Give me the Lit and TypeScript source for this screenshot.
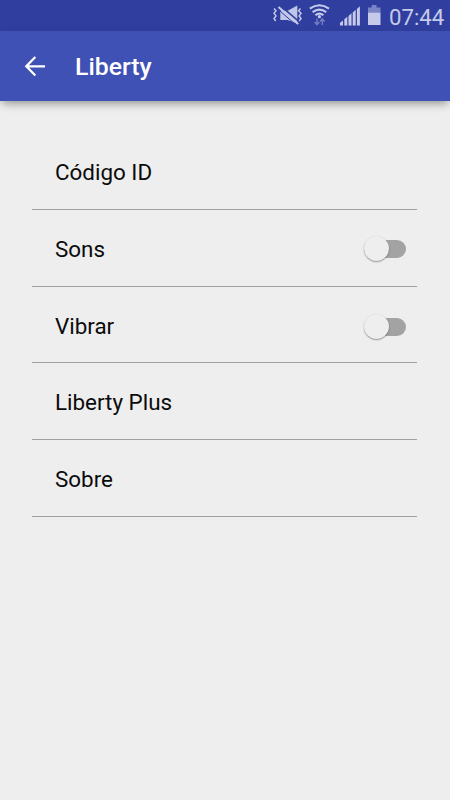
import { LitElement, html, css, svg } from "lit";
import { customElement, property } from "lit/decorators.js";

@customElement("toggle-switch")
class ToggleSwitch extends LitElement {
  static styles = css`
    :host { display: flex; width: 42px; height: 25px; align-items: center; justify-content: flex-end; position: relative; }
    .track { width: 35px; height: 18px; border-radius: 9px; background: #a3a3a3; }
    .thumb { position: absolute; left: 0; top: 0; width: 25px; height: 25px; border-radius: 50%; background: #eeeeee; box-shadow: 0 1px 1.5px rgba(0,0,0,.36), 0 0 1px rgba(0,0,0,.1); }
  `;
  render() { return html`<div class="track"></div><div class="thumb"></div>`; }
}

@customElement("settings-row")
class SettingsRow extends LitElement {
  @property() label = "";
  @property({ type: Boolean }) toggle = false;
  static styles = css`
    :host { display: flex; box-sizing: border-box; align-items: center; justify-content: space-between; padding: 2px 11px 0 23px; border-bottom: 1px solid #a1a1a1; color: #0b0b0b; font: 22.4px/28px Roboto, sans-serif; }
    .label { padding-bottom: 1px; }
    :host([toggle]) .label { padding-bottom: 0; }
    :host(.lower) .label { padding-bottom: 2px; }
  `;
  render() {
    return html`<span class="label">${this.label}</span>${this.toggle ? html`<toggle-switch></toggle-switch>` : null}`;
  }
}

const muted = svg`
  <g fill="none" stroke="#c5cae9" stroke-width="1.4">
    <path d="M274 8.5l2 2.2-2 2.6 2 2.6-2 2.6 1.6 2.5"/>
    <path d="M300.5 8.5l-2 2.2 2.6 2.6-2 2.6 2 2.6-2 2.5"/>
  </g>
  <path d="M280.3 10.8h7.4L297.3 5.5v18l-9.6-3.4h-7.4z" fill="#c0c6e7"/>
  <path d="M280.3 5.6l18.5 15.8" stroke="#303f9f" stroke-width="1.4"/>
  <path d="M278.5 7l19.7 17" stroke="#c5cae9" stroke-width="2"/>
  <path d="M277.3 8.6l19.4 17" stroke="#303f9f" stroke-width="1"/>`;
const wifi = svg`
  <g fill="none" stroke="#c5cae9" stroke-width="2.1">
    <path d="M309.8 8.7Q319.4 1.8 329 8.7"/><path d="M312.6 12.2Q319.4 6.9 326.2 12.2"/><path d="M315.4 15.3Q319.4 11.9 323.4 15.3"/>
  </g>
  <circle cx="319.4" cy="16.7" r="1.6" fill="#c5cae9"/>
  <path d="M317 18.5v6M314.7 22l2.3 2.6 2.3-2.6M322.3 25v-6M320 21.5l2.3-2.6 2.3 2.6" fill="none" stroke="#7580c2" stroke-width="1.4"/>`;
const signal = svg`<path d="M340 25.5v-2.8l3-2.3v5.1zM344.3 25.5v-6.2l3-2.6v8.8zM348.5 25.5v-9.6l3-2.6v12.2zM352.7 25.5v-13l3-2.7v15.7zM356.9 25.5V9l3-2.8v19.3z" fill="#c5cae9"/>`;
const battery = svg`<path d="M371.7 5h4.8v2.6h4V13H368V7.6h3.7z" fill="#7984c5"/><path d="M368 12.7h12.5V25H368z" fill="#c5cae9"/>`;

@customElement("app-root")
class AppRoot extends LitElement {
  static styles = css`
    :host { display: flex; flex-direction: column; width: 450px; height: 800px; background: #eeeeee; overflow: hidden; font-family: Roboto, sans-serif; }
    .status { flex: none; display: flex; align-items: center; height: 31px; background: #303f9f; padding-left: 265px; box-sizing: border-box; }
    .icons { width: 124px; height: 31px; flex: none; }
    .clock { color: #c5cae9; font-size: 22.2px; line-height: 28px; padding-top: 3px; white-space: nowrap; }
    .bar { flex: none; display: flex; align-items: center; height: 70px; background: #3f51b5; box-shadow: 0 4px 9px -2px rgba(0,0,0,.42); color: #fff; box-sizing: border-box; padding-left: 24px; z-index: 1; }
    .back { width: 22px; height: 22px; margin-right: 29px; }
    .title { margin: 0; font-size: 24.8px; font-weight: 500; line-height: 30px; padding-top: 2px; }
    .list { display: grid; grid-template-rows: 77px 77px 76px 77px 77px; margin: 32px 33px 0 32px; width: 385px; }
    .lower { padding-top: 4px; }
    .upper { padding-top: 1px; }
  `;
  render() {
    return html`
      <div class="status">
        <svg class="icons" viewBox="265 0 124 31">${muted}${wifi}${signal}${battery}</svg>
        <span class="clock">07:44</span>
      </div>
      <header class="bar">
        <svg class="back" viewBox="0 0 22 22"><path d="M21 11.4H3M11.3 2L2.3 11.3l9 9.2" fill="none" stroke="#fff" stroke-width="2.3"/></svg>
        <h1 class="title">Liberty</h1>
      </header>
      <main class="list">
        <settings-row label="Código ID"></settings-row>
        <settings-row class="upper" label="Sons" toggle></settings-row>
        <settings-row class="lower" label="Vibrar" toggle></settings-row>
        <settings-row label="Liberty Plus"></settings-row>
        <settings-row label="Sobre"></settings-row>
      </main>`;
  }
}
